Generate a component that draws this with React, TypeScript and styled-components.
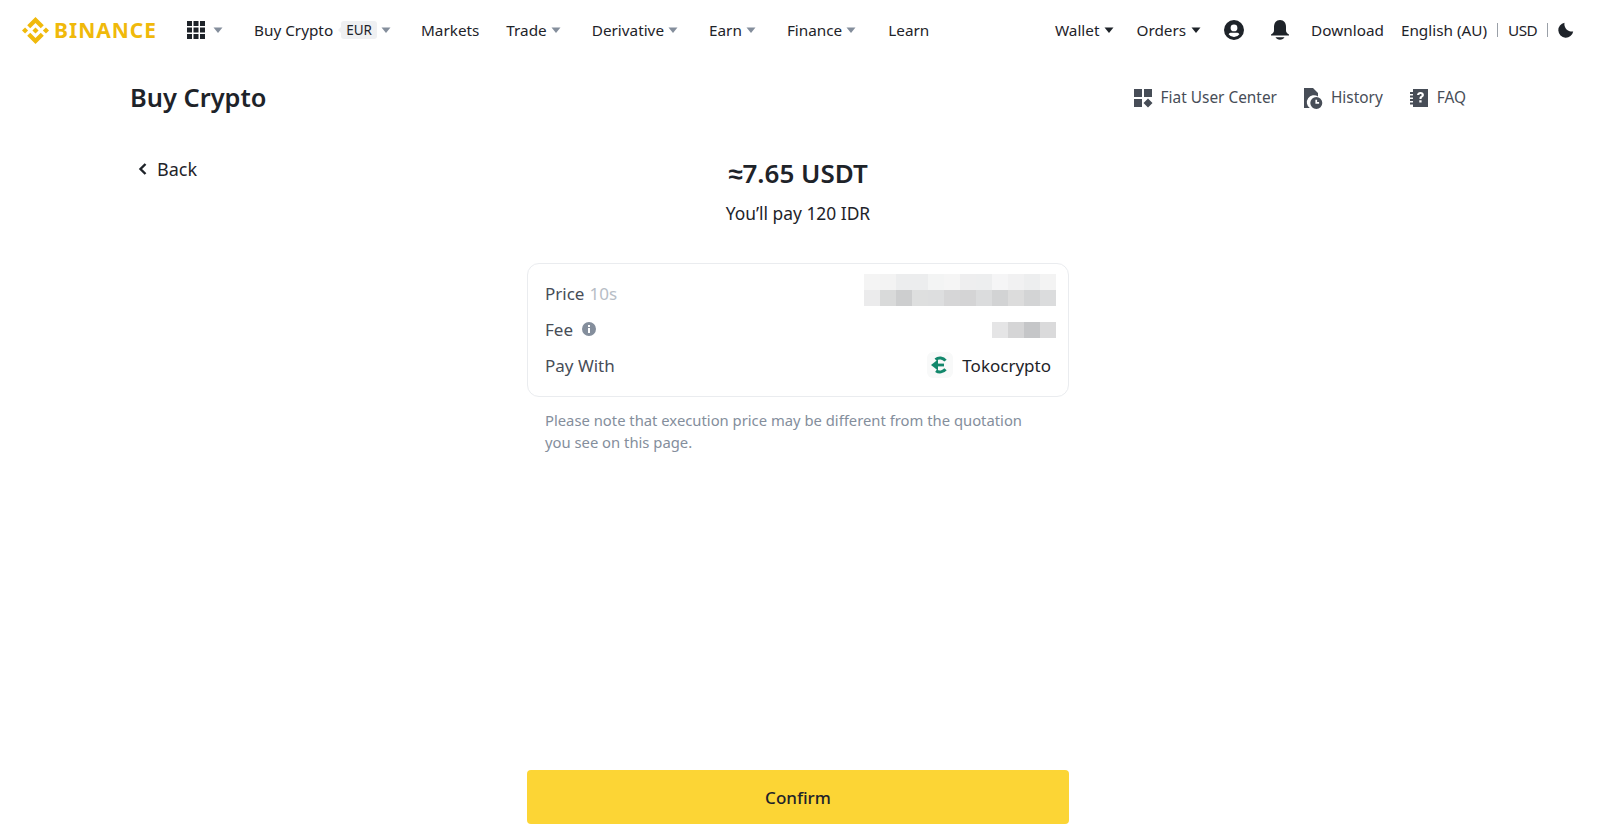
import React from 'react';
import styled, { createGlobalStyle } from 'styled-components';

const GlobalStyle = createGlobalStyle`
  html, body {
    margin: 0;
    padding: 0;
    background: #fff;
  }
  body {
    font-family: "Noto Sans", "Liberation Sans", sans-serif;
    color: #1e2329;
  }
  * {
    box-sizing: border-box;
  }
`;

const Page = styled.div`
  display: flex;
  flex-direction: column;
  height: 837px;
  overflow: hidden;
`;

const Header = styled.header`
  display: flex;
  align-items: center;
  justify-content: space-between;
  height: 60px;
  padding: 0 26px 0 22px;
  flex-shrink: 0;
`;

const NavGroup = styled.nav`
  display: flex;
  align-items: center;
`;

const Logo = styled.div`
  display: flex;
  align-items: center;
  gap: 5px;
  width: 164px;
  color: #f0b90b;
  font-size: 21px;
  font-weight: 700;
  letter-spacing: 1px;
`;

const NavItem = styled.a<{ $gap?: number }>`
  display: flex;
  align-items: center;
  margin-right: ${(p) => p.$gap ?? 0}px;
  font-size: 15.3px;
  line-height: 24px;
  color: #1e2329;
  white-space: nowrap;
`;

const Currency = styled(NavItem)`
  letter-spacing: -0.6px;
`;

const Badge = styled.span`
  position: relative;
  margin-left: 8px;
  padding: 0 5px;
  height: 18px;
  line-height: 18px;
  font-size: 13.5px;
  background: #eff0f2;
  border-radius: 3px;

  &::before {
    content: '';
    position: absolute;
    left: -3px;
    top: 6px;
    border-top: 3px solid transparent;
    border-bottom: 3px solid transparent;
    border-right: 3px solid #eff0f2;
  }
`;

const Caret = styled.svg<{ $dark?: boolean; $left?: number }>`
  width: 12px;
  height: 12px;
  margin-left: ${(p) => p.$left ?? 3}px;
  fill: ${(p) => (p.$dark ? '#1e2329' : '#848e9c')};
`;

const Divider = styled.span`
  width: 1px;
  height: 14px;
  margin: 0 10px;
  background: #9aa0a8;
`;

const Main = styled.main`
  display: flex;
  flex-direction: column;
  flex: 1;
  min-height: 0;
  padding: 0 134px 13px 130px;
`;

const TitleRow = styled.div`
  display: flex;
  align-items: center;
  justify-content: space-between;
  height: 75px;
  flex-shrink: 0;
`;

const Title = styled.h1`
  margin: 0;
  padding-bottom: 2px;
  font-size: 25.4px;
  line-height: 36px;
  font-weight: 600;
`;

const Links = styled.div`
  display: flex;
  align-items: center;
  gap: 26px;
`;

const LinkItem = styled.a`
  display: flex;
  align-items: center;
  gap: 8px;
  font-size: 15.4px;
  line-height: 24px;
  color: #474d57;
`;

const Content = styled.div`
  display: grid;
  grid-template-columns: 397px 542px;
  flex: 1;
  min-height: 0;
  padding-top: 22px;
`;

const BackLink = styled.a`
  display: flex;
  align-items: center;
  align-self: start;
  gap: 8px;
  padding-left: 7px;
  font-size: 18px;
  line-height: 24px;
`;

const Center = styled.div`
  display: flex;
  flex-direction: column;
  min-height: 0;
`;

const Amount = styled.div`
  font-size: 26px;
  line-height: 32px;
  font-weight: 600;
  text-align: center;
`;

const Pay = styled.div`
  margin-top: 12px;
  font-size: 17.4px;
  line-height: 24px;
  text-align: center;
`;

const Card = styled.div`
  margin-top: 38px;
  padding: 11px 12px 13px 17px;
  border: 1px solid #eaecef;
  border-radius: 12px;
`;

const Row = styled.div`
  display: flex;
  align-items: center;
  justify-content: space-between;
  height: 36px;
  font-size: 17px;
  color: #474d57;
`;

const Label = styled.span`
  display: flex;
  align-items: center;
  gap: 9px;
`;

const Timer = styled.span`
  margin-left: -4px;
  color: #b7bdc6;
`;

const Mosaic = styled.div<{ $cols: number; $shift?: number }>`
  display: grid;
  grid-template-columns: repeat(${(p) => p.$cols}, 16px);
  grid-auto-rows: 16px;
  margin-top: ${(p) => p.$shift ?? 0}px;
`;

const Pixel = styled.span<{ $c: string }>`
  background: ${(p) => p.$c};
`;

const Provider = styled.div`
  display: flex;
  align-items: center;
  gap: 9px;
  margin-right: 5px;
  color: #1e2329;
`;

const ProviderMark = styled.span`
  display: flex;
  align-items: center;
  justify-content: center;
  width: 26px;
  height: 26px;
  border-radius: 6px;
  background: #f8f9f9;
`;

const Note = styled.p`
  margin: 12px 30px 0 18px;
  font-size: 14.8px;
  line-height: 22px;
  color: #848e9c;
`;

const ConfirmButton = styled.button`
  margin-top: auto;
  height: 54px;
  flex-shrink: 0;
  border: 0;
  border-radius: 4px;
  background: #fcd535;
  font: inherit;
  font-size: 17px;
  font-weight: 500;
  color: #1e2329;
`;

const CaretIcon = (props: { $dark?: boolean; $left?: number }) => (
  <Caret viewBox="0 0 12 12" {...props}>
    <path d="M1.500 3.500h9L6 9z" />
  </Caret>
);

const priceTop = ['#f4f4f4', '#f3f3f3', '#ecedee', '#ecedee', '#f3f4f4', '#f5f5f5', '#eeeeef', '#edeeef', '#f5f5f6', '#f1f1f2', '#edeeef', '#f3f3f3'];
const priceBottom = ['#ebebec', '#d9dada', '#cdcecf', '#dedfdf', '#dddedf', '#d6d6d7', '#d4d4d5', '#dbdcdd', '#d2d3d4', '#dcdcdc', '#d3d4d5', '#dbdcdd'];
const feeCells = ['#e5e5e6', '#d5d5d6', '#c5c6c8', '#dadadb'];

const App: React.FunctionComponent = () => (
  <Page>
    <GlobalStyle />
    <Header>
      <NavGroup>
        <Logo>
          <svg width="27" height="27" viewBox="0 0 126.61 126.61" fill="#f0b90b">
            <path d="M38.73 53.2l24.59-24.58 24.6 24.6 14.3-14.31L63.32 0 24.42 38.9l14.31 14.3z" />
            <path d="M0 63.31l14.3-14.31 14.31 14.31-14.31 14.3z" />
            <path d="M38.73 73.41l24.59 24.59 24.6-24.6 14.31 14.29-38.9 38.91-38.91-38.88v-.03l14.31-14.28z" />
            <path d="M98.01 63.31l14.3-14.31 14.31 14.3-14.31 14.32z" />
            <path d="M77.83 63.3L63.32 48.78 52.59 59.51l-1.24 1.23-2.54 2.54 14.51 14.5 14.51-14.47z" />
          </svg>
          BINANCE
        </Logo>
        <NavItem $gap={30}>
          <svg width="20" height="20" viewBox="0 0 20 20" fill="#1e2329">
            <path d="M1 1h5v5H1zM7.500 1h5v5h-5zM14 1h5v5h-5zM1 7.500h5v5H1zM7.500 7.500h5v5h-5zM14 7.500h5v5h-5zM1 14h5v5H1zM7.500 14h5v5h-5zM14 14h5v5h-5z" />
          </svg>
          <CaretIcon $left={6} />
        </NavItem>
        <NavItem $gap={29}>
          Buy Crypto
          <Badge>EUR</Badge>
          <CaretIcon />
        </NavItem>
        <NavItem $gap={27}>Markets</NavItem>
        <NavItem $gap={30}>
          Trade
          <CaretIcon />
        </NavItem>
        <NavItem $gap={30}>
          Derivative
          <CaretIcon />
        </NavItem>
        <NavItem $gap={30}>
          Earn
          <CaretIcon />
        </NavItem>
        <NavItem $gap={31}>
          Finance
          <CaretIcon />
        </NavItem>
        <NavItem>Learn</NavItem>
      </NavGroup>
      <NavGroup>
        <NavItem $gap={21}>
          Wallet
          <CaretIcon $dark $left={4} />
        </NavItem>
        <NavItem $gap={21}>
          Orders
          <CaretIcon $dark $left={4} />
        </NavItem>
        <NavItem $gap={24}>
          <svg width="22" height="22" viewBox="0 0 22 22" fill="#1e2329">
            <path
              fillRule="evenodd"
              d="M11 1a10 10 0 1 1 0 20 10 10 0 0 1 0-20zm0 4.500a3.400 3.400 0 1 0 0 6.800 3.400 3.400 0 0 0 0-6.800zM5.600 15.200A6.500 6.500 0 0 0 11 18a6.500 6.500 0 0 0 5.400-2.800c-.6-.9-1.700-1.400-2.900-1.400h-5c-1.200 0-2.300.5-2.900 1.400z"
            />
          </svg>
        </NavItem>
        <NavItem $gap={20}>
          <svg width="22" height="22" viewBox="0 0 22 22" fill="#1e2329">
            <path d="M11 1C7 1 5 4 5 8v3.500c0 1.800-1.200 3-3 4V16.500h18v-1c-1.800-1-3-2.200-3-4V8c0-4-2-7-6-7z" />
            <path d="M6.500 18.300h9c-.8 1.600-2.400 2.500-4.500 2.500s-3.700-.9-4.500-2.500z" />
          </svg>
        </NavItem>
        <NavItem $gap={17}>Download</NavItem>
        <NavItem>English (AU)</NavItem>
        <Divider />
        <Currency>USD</Currency>
        <Divider />
        <NavItem>
          <svg width="16" height="16" viewBox="0 0 16 16" fill="#1e2329">
            <path d="M6.500.8A7.500 7.500 0 1 0 15.200 9.500 7.500 7.500 0 0 1 6.500.8z" />
          </svg>
        </NavItem>
      </NavGroup>
    </Header>
    <Main>
      <TitleRow>
        <Title>Buy Crypto</Title>
        <Links>
          <LinkItem>
            <svg width="20" height="20" viewBox="0 0 20 20" fill="#474d57">
              <path d="M1 1h8v8H1zM11 1h8v8h-8zM1 11h8v8H1zM15 10.500l4.500 4.500-4.500 4.500-4.500-4.500z" />
            </svg>
            Fiat User Center
          </LinkItem>
          <LinkItem>
            <svg width="20" height="22" viewBox="0 0 20 22" fill="#474d57">
              <path d="M1 1h9l5 5v3.500a7 7 0 0 0-8.200 11.500H1z" />
              <path
                fillRule="evenodd"
                d="M13.300 10a6 6 0 1 1 0 12 6 6 0 0 1 0-12zm-.9 2.700v4.100h3.700v-1.700h-2v-2.400z"
              />
            </svg>
            History
          </LinkItem>
          <LinkItem>
            <svg width="20" height="20" viewBox="0 0 20 20" fill="#474d57">
              <path
                fillRule="evenodd"
                d="M4 1h15v18H4v-2.500H1v-2h3v-1.500H1v-2h3V9.500H1v-2h3V6H1V4h3zm7.500 3C9.600 4 8.200 5.200 8 7h2.200c.1-.7.600-1.100 1.300-1.100s1.200.4 1.200 1c0 .5-.3.800-.9 1.200-.9.600-1.300 1.200-1.300 2.400v.5h2.100v-.3c0-.6.200-.9.900-1.400.9-.6 1.400-1.400 1.400-2.500C14.900 5.100 13.500 4 11.500 4zm-1.200 8.300v2.200h2.300v-2.200z"
              />
            </svg>
            FAQ
          </LinkItem>
        </Links>
      </TitleRow>
      <Content>
        <BackLink>
          <svg width="12" height="14" viewBox="0 0 12 14" fill="none" stroke="#1e2329" strokeWidth="2.400">
            <path d="M8.500 2L3.500 7l5 5" />
          </svg>
          Back
        </BackLink>
        <Center>
          <Amount>≈7.65 USDT</Amount>
          <Pay>You’ll pay 120 IDR</Pay>
          <Card>
            <Row>
              <Label>
                Price
                <Timer>10s</Timer>
              </Label>
              <Mosaic $cols={12} $shift={-6}>
                {[...priceTop, ...priceBottom].map((c, i) => (
                  <Pixel key={i} $c={c} />
                ))}
              </Mosaic>
            </Row>
            <Row>
              <Label>
                Fee
                <svg width="14" height="14" viewBox="0 0 14 14" fill="#848e9c">
                  <path
                    fillRule="evenodd"
                    d="M7 0a7 7 0 1 1 0 14A7 7 0 0 1 7 0zM6 3v2h2V3zm0 3v5h2V6z"
                  />
                </svg>
              </Label>
              <Mosaic $cols={4} $shift={2}>
                {feeCells.map((c, i) => (
                  <Pixel key={i} $c={c} />
                ))}
              </Mosaic>
            </Row>
            <Row>
              <Label>Pay With</Label>
              <Provider>
                <ProviderMark>
                  <svg width="18" height="18" viewBox="0 0 18 18" fill="none" stroke="#12876b" strokeWidth="3">
                    <path d="M4.500 3.600A7 7 0 0 1 14.500 4.700" />
                    <path d="M5 14.700A7 7 0 0 0 14.500 13.300" />
                    <path d="M6 9h7" strokeWidth="2.800" />
                    <path d="M0 9l7-5.500v11z" fill="#12876b" stroke="none" />
                  </svg>
                </ProviderMark>
                Tokocrypto
              </Provider>
            </Row>
          </Card>
          <Note>Please note that execution price may be different from the quotation you see on this page.</Note>
          <ConfirmButton>Confirm</ConfirmButton>
        </Center>
      </Content>
    </Main>
  </Page>
);

export default App;
